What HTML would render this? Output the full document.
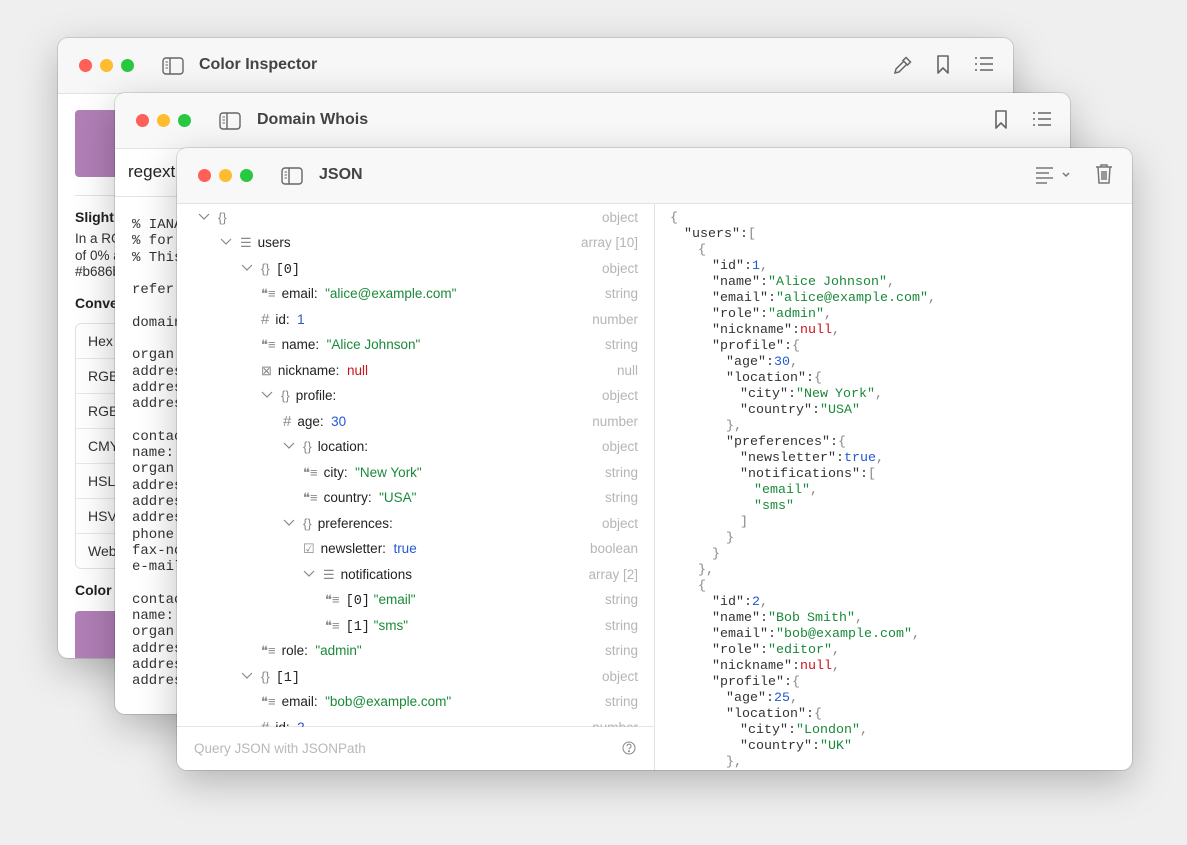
<!DOCTYPE html>
<html><head><meta charset="utf-8"><style>
*{box-sizing:border-box;margin:0;padding:0}
body{width:1187px;height:845px;overflow:hidden;background:#efefef;font-family:"Liberation Sans",sans-serif;position:relative}
.win{position:absolute;background:#fff;border-radius:10px;overflow:hidden;box-shadow:0 12px 40px rgba(0,0,0,.25),0 0 0 1px rgba(0,0,0,.12)}
.tb{position:absolute;left:0;right:0;top:0;height:56px;background:#f8f8f8;border-bottom:1px solid #e2e2e2}
.dot{position:absolute;top:21px;width:13px;height:13px;border-radius:50%}
.r{background:#fe5f57}.y{background:#febc2e}.g{background:#28c840}
.title{position:absolute;top:18px;font-size:16px;font-weight:bold;color:#444}
.side{position:absolute;top:19px}
.mono{font-family:"Liberation Mono",monospace}
.row{position:absolute;height:25.5px;line-height:25.5px;font-size:13.5px;color:#222;white-space:nowrap;left:0;right:0}
.row .t{position:absolute;right:16px;color:#b5b5b5}
.s{color:#1a8a3a}.n{color:#2457d6}.nl{color:#c8161d}
.ic{display:inline-block;color:#888;margin-right:6px;font-size:13px}
.chev{display:inline-block;width:12px;height:12px;margin-right:8px;position:relative;top:0px}
.code{position:absolute;font-size:13.33px;word-spacing:-1px;line-height:16px;color:#333;white-space:pre}
.code .p{color:#888}
</style></head><body>

<div class="win" style="left:58px;top:38px;width:955px;height:620px">
 <div class="tb" style="background:#f7f7f7"></div>
 <div class="dot r" style="left:21px"></div><div class="dot y" style="left:42px"></div><div class="dot g" style="left:63px"></div>
 <svg class="side" style="left:104px" width="22" height="18" viewBox="0 0 22 18"><rect x="1" y="1" width="20" height="16" rx="3" fill="none" stroke="#666" stroke-width="1.4"/><line x1="8" y1="1" x2="8" y2="17" stroke="#666" stroke-width="1.4"/><path d="M3.5 5h2.5M3.5 8h2.5M3.5 11h2.5" stroke="#666" stroke-width="1"/></svg>
 <div class="title" style="left:141px">Color Inspector</div>
 <svg style="position:absolute;left:834px;top:16px" width="22" height="22" viewBox="0 0 22 22" fill="none" stroke="#666" stroke-width="1.5"><path d="M14 3.5l4.5 4.5-3 3-4.5-4.5z"/><path d="M12 7l-8 8-1 4 4-1 8-8"/></svg>
 <svg style="position:absolute;left:878px;top:16px" width="14" height="22" viewBox="0 0 14 22" fill="none" stroke="#666" stroke-width="1.6"><path d="M2 2h10v17l-5-5-5 5z" stroke-linejoin="round"/></svg>
 <svg style="position:absolute;left:916px;top:18px" width="20" height="16" viewBox="0 0 20 16" fill="none" stroke="#666" stroke-width="1.5"><path d="M6 2h13M6 8h13M6 14h13"/><path d="M1 2h2M1 8h2M1 14h2"/></svg>
 <div style="position:absolute;left:17px;top:72px;width:70px;height:67px;background:#b07fb6;border-radius:4px"></div>
 <div style="position:absolute;left:17px;top:157px;right:0;border-top:1px solid #e4e4e4"></div>
 <div style="position:absolute;left:17px;top:171px;font-size:14px;font-weight:bold;color:#222">Slight</div>
 <div style="position:absolute;left:17px;top:193px;font-size:13.5px;line-height:16.5px;color:#333">In a RGB<br>of 0% a<br>#b686b</div>
 <div style="position:absolute;left:17px;top:257px;font-size:14px;font-weight:bold;color:#222">Conve</div>
 <div style="position:absolute;left:17px;top:285px;width:200px;height:246px;border:1px solid #e2e2e2;border-radius:6px;font-size:14px;color:#333">
  <div style="height:35px;line-height:35px;padding-left:12px;border-bottom:1px solid #e8e8e8">Hex</div>
  <div style="height:35px;line-height:35px;padding-left:12px;border-bottom:1px solid #e8e8e8">RGB</div>
  <div style="height:35px;line-height:35px;padding-left:12px;border-bottom:1px solid #e8e8e8">RGB</div>
  <div style="height:35px;line-height:35px;padding-left:12px;border-bottom:1px solid #e8e8e8">CMYK</div>
  <div style="height:35px;line-height:35px;padding-left:12px;border-bottom:1px solid #e8e8e8">HSL</div>
  <div style="height:35px;line-height:35px;padding-left:12px;border-bottom:1px solid #e8e8e8">HSV</div>
  <div style="height:35px;line-height:35px;padding-left:12px">Web</div>
 </div>
 <div style="position:absolute;left:17px;top:544px;font-size:14px;font-weight:bold;color:#222">Color</div>
 <div style="position:absolute;left:17px;top:573px;width:70px;height:60px;background:#b07fb6;border-radius:4px"></div>
</div>

<div class="win" style="left:115px;top:93px;width:955px;height:621px">
 <div class="tb"></div>
 <div class="dot r" style="left:21px"></div><div class="dot y" style="left:42px"></div><div class="dot g" style="left:63px"></div>
 <svg class="side" style="left:104px" width="22" height="18" viewBox="0 0 22 18"><rect x="1" y="1" width="20" height="16" rx="3" fill="none" stroke="#666" stroke-width="1.4"/><line x1="8" y1="1" x2="8" y2="17" stroke="#666" stroke-width="1.4"/><path d="M3.5 5h2.5M3.5 8h2.5M3.5 11h2.5" stroke="#666" stroke-width="1"/></svg>
 <div class="title" style="left:142px">Domain Whois</div>
 <svg style="position:absolute;left:879px;top:16px" width="14" height="22" viewBox="0 0 14 22" fill="none" stroke="#666" stroke-width="1.6"><path d="M2 2h10v17l-5-5-5 5z" stroke-linejoin="round"/></svg>
 <svg style="position:absolute;left:917px;top:18px" width="20" height="16" viewBox="0 0 20 16" fill="none" stroke="#666" stroke-width="1.5"><path d="M6 2h13M6 8h13M6 14h13"/><path d="M1 2h2M1 8h2M1 14h2"/></svg>
 <div style="position:absolute;left:0;right:0;top:56px;height:48px;border-bottom:1px solid #e4e4e4"></div>
 <div style="position:absolute;left:13px;top:69px;font-size:17px;color:#222">regext</div>
 <div class="mono" style="position:absolute;left:17px;top:124px;font-size:14px;line-height:16.3px;color:#333;white-space:pre">% IANA
% for
% This

refer

domain

organ
addres
addres
addres

contac
name:
organ
addres
addres
addres
phone
fax-no
e-mail

contac
name:
organ
addres
addres
addres</div>
</div>

<div class="win" style="left:177px;top:148px;width:955px;height:622px">
 <div class="tb"></div>
 <div class="dot r" style="left:21px"></div><div class="dot y" style="left:42px"></div><div class="dot g" style="left:63px"></div>
 <svg class="side" style="left:104px" width="22" height="18" viewBox="0 0 22 18"><rect x="1" y="1" width="20" height="16" rx="3" fill="none" stroke="#666" stroke-width="1.4"/><line x1="8" y1="1" x2="8" y2="17" stroke="#666" stroke-width="1.4"/><path d="M3.5 5h2.5M3.5 8h2.5M3.5 11h2.5" stroke="#666" stroke-width="1"/></svg>
 <div class="title" style="left:142px">JSON</div>
 <svg style="position:absolute;left:858px;top:18px" width="36" height="18" viewBox="0 0 36 18" fill="none" stroke="#777" stroke-width="1.5"><path d="M1 2h17M1 7h13M1 12h17M1 17h11"/><path d="M28 7l3 3 3-3"/></svg>
 <svg style="position:absolute;left:918px;top:15px" width="18" height="22" viewBox="0 0 18 22" fill="none" stroke="#777" stroke-width="1.5"><path d="M1 4h16M6 4V2h6v2M3 4l1 16h10l1-16M7 8v9M9 8v9M11 8v9"/></svg>
 <div style="position:absolute;left:477px;top:56px;bottom:0;border-left:1px solid #e2e2e2"></div>
 <div style="position:absolute;left:0;width:477px;top:578px;bottom:0;border-top:1px solid #e4e4e4;background:#fff"></div>
 <div style="position:absolute;left:17px;top:593px;font-size:13.5px;color:#b8b8b8">Query JSON with JSONPath</div>
 <svg style="position:absolute;left:445px;top:593px" width="14" height="14" viewBox="0 0 14 14" fill="none" stroke="#888" stroke-width="1"><circle cx="7" cy="7" r="6"/><path d="M5 5.3a2 2 0 1 1 2.6 1.8c-.5.2-.6.5-.6 1.1"/><circle cx="7" cy="10.3" r=".5" fill="#888"/></svg>
</div>

<div style="position:absolute;left:180px;top:204px;width:474px;height:523px;overflow:hidden">
<div class="row" style="top:0.5px;padding-left:18px"><svg class="chev" viewBox="0 0 12 12"><path d="M1 4l5 5 5-5" stroke="#888" fill="none" stroke-width="1.2"/></svg><span class="ic">{}</span><span class="t">object</span></div>
<div class="row" style="top:26px;padding-left:40px"><svg class="chev" viewBox="0 0 12 12"><path d="M1 4l5 5 5-5" stroke="#888" fill="none" stroke-width="1.2"/></svg><span class="ic">☰</span>users<span class="t">array [10]</span></div>
<div class="row" style="top:51.5px;padding-left:61px"><svg class="chev" viewBox="0 0 12 12"><path d="M1 4l5 5 5-5" stroke="#888" fill="none" stroke-width="1.2"/></svg><span class="ic">{}</span><span class="mono">[0]</span><span class="t">object</span></div>
<div class="row" style="top:77px;padding-left:81px"><span class="ic">❝≡</span>email:&nbsp; <span class="s">"alice@example.com"</span><span class="t">string</span></div>
<div class="row" style="top:102.5px;padding-left:81px"><span class="ic" style="font-size:15px">#</span>id:&nbsp; <span class="n">1</span><span class="t">number</span></div>
<div class="row" style="top:128px;padding-left:81px"><span class="ic">❝≡</span>name:&nbsp; <span class="s">"Alice Johnson"</span><span class="t">string</span></div>
<div class="row" style="top:153.5px;padding-left:81px"><span class="ic">⊠</span>nickname:&nbsp; <span class="nl">null</span><span class="t">null</span></div>
<div class="row" style="top:179px;padding-left:81px"><svg class="chev" viewBox="0 0 12 12"><path d="M1 4l5 5 5-5" stroke="#888" fill="none" stroke-width="1.2"/></svg><span class="ic">{}</span>profile:<span class="t">object</span></div>
<div class="row" style="top:204.5px;padding-left:103px"><span class="ic" style="font-size:15px">#</span>age:&nbsp; <span class="n">30</span><span class="t">number</span></div>
<div class="row" style="top:230px;padding-left:103px"><svg class="chev" viewBox="0 0 12 12"><path d="M1 4l5 5 5-5" stroke="#888" fill="none" stroke-width="1.2"/></svg><span class="ic">{}</span>location:<span class="t">object</span></div>
<div class="row" style="top:255.5px;padding-left:123px"><span class="ic">❝≡</span>city:&nbsp; <span class="s">"New York"</span><span class="t">string</span></div>
<div class="row" style="top:281px;padding-left:123px"><span class="ic">❝≡</span>country:&nbsp; <span class="s">"USA"</span><span class="t">string</span></div>
<div class="row" style="top:306.5px;padding-left:103px"><svg class="chev" viewBox="0 0 12 12"><path d="M1 4l5 5 5-5" stroke="#888" fill="none" stroke-width="1.2"/></svg><span class="ic">{}</span>preferences:<span class="t">object</span></div>
<div class="row" style="top:332px;padding-left:123px"><span class="ic">☑</span>newsletter:&nbsp; <span class="n">true</span><span class="t">boolean</span></div>
<div class="row" style="top:357.5px;padding-left:123px"><svg class="chev" viewBox="0 0 12 12"><path d="M1 4l5 5 5-5" stroke="#888" fill="none" stroke-width="1.2"/></svg><span class="ic">☰</span>notifications<span class="t">array [2]</span></div>
<div class="row" style="top:383px;padding-left:145px"><span class="ic">❝≡</span><span class="mono">[0]</span> <span class="s">"email"</span><span class="t">string</span></div>
<div class="row" style="top:408.5px;padding-left:145px"><span class="ic">❝≡</span><span class="mono">[1]</span> <span class="s">"sms"</span><span class="t">string</span></div>
<div class="row" style="top:434px;padding-left:81px"><span class="ic">❝≡</span>role:&nbsp; <span class="s">"admin"</span><span class="t">string</span></div>
<div class="row" style="top:459.5px;padding-left:61px"><svg class="chev" viewBox="0 0 12 12"><path d="M1 4l5 5 5-5" stroke="#888" fill="none" stroke-width="1.2"/></svg><span class="ic">{}</span><span class="mono">[1]</span><span class="t">object</span></div>
<div class="row" style="top:485px;padding-left:81px"><span class="ic">❝≡</span>email:&nbsp; <span class="s">"bob@example.com"</span><span class="t">string</span></div>
<div class="row" style="top:510.5px;padding-left:81px"><span class="ic" style="font-size:15px">#</span>id:&nbsp; <span class="n">2</span><span class="t">number</span></div>
</div>

<div style="position:absolute;left:656px;top:204px;width:475px;height:565px;overflow:hidden">
<div class="code mono" style="left:14px;top:7px"><span class="p">{</span>
  "users":<span class="p">[</span>
    <span class="p">{</span>
      "id":<span class="n">1</span><span class="p">,</span>
      "name":<span class="s">"Alice Johnson"</span><span class="p">,</span>
      "email":<span class="s">"alice@example.com"</span><span class="p">,</span>
      "role":<span class="s">"admin"</span><span class="p">,</span>
      "nickname":<span class="nl">null</span><span class="p">,</span>
      "profile":<span class="p">{</span>
        "age":<span class="n">30</span><span class="p">,</span>
        "location":<span class="p">{</span>
          "city":<span class="s">"New York"</span><span class="p">,</span>
          "country":<span class="s">"USA"</span>
        <span class="p">},</span>
        "preferences":<span class="p">{</span>
          "newsletter":<span class="n">true</span><span class="p">,</span>
          "notifications":<span class="p">[</span>
            <span class="s">"email"</span><span class="p">,</span>
            <span class="s">"sms"</span>
          <span class="p">]</span>
        <span class="p">}</span>
      <span class="p">}</span>
    <span class="p">},</span>
    <span class="p">{</span>
      "id":<span class="n">2</span><span class="p">,</span>
      "name":<span class="s">"Bob Smith"</span><span class="p">,</span>
      "email":<span class="s">"bob@example.com"</span><span class="p">,</span>
      "role":<span class="s">"editor"</span><span class="p">,</span>
      "nickname":<span class="nl">null</span><span class="p">,</span>
      "profile":<span class="p">{</span>
        "age":<span class="n">25</span><span class="p">,</span>
        "location":<span class="p">{</span>
          "city":<span class="s">"London"</span><span class="p">,</span>
          "country":<span class="s">"UK"</span>
        <span class="p">},</span></div>
</div>
</body></html>
